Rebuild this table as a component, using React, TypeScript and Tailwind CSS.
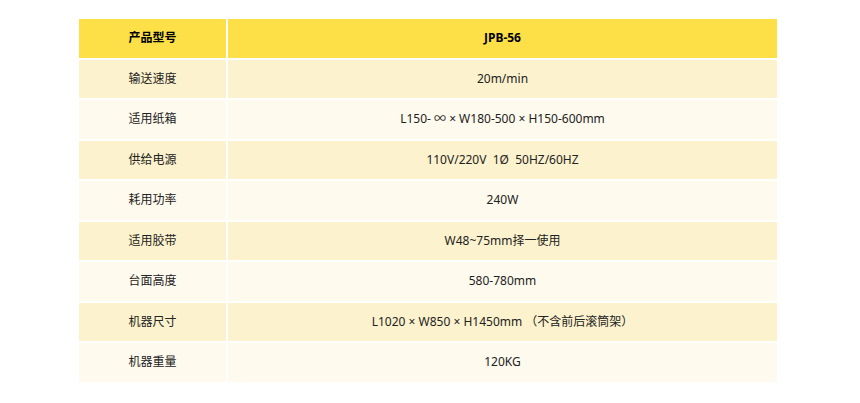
const rows: [string, string][] = [
  ["输送速度", "20m/min"],
  ["适用纸箱", "L150- ∞ × W180-500 × H150-600mm"],
  ["供给电源", "110V/220V  1Ø  50HZ/60HZ"],
  ["耗用功率", "240W"],
  ["适用胶带", "W48~75mm择一使用"],
  ["台面高度", "580-780mm"],
  ["机器尺寸", "L1020 × W850 × H1450mm （不含前后滚筒架）"],
  ["机器重量", "120KG"],
];

const font = "font-['Noto_Sans','Noto_Sans_CJK_SC',sans-serif]";

export default function App() {
  return (
    <div className={`min-h-screen bg-white pt-[19px] pl-[79px] ${font} text-[12px] text-[#222]`}>
      <div className="grid w-[698px] grid-cols-[147px_549px] gap-[2px]">
        <div className="flex h-[38.5px] items-center justify-center bg-[#fde047] font-bold text-black">产品型号</div>
        <div className="flex h-[38.5px] items-center justify-center bg-[#fde047] font-bold text-black">JPB-56</div>
        {rows.map(([label, value], i) => {
          const bg = i % 2 === 0 ? "bg-[#fcf2cd]" : "bg-[#fefaee]";
          return [
            <div key={label} className={`flex h-[38.5px] items-center justify-center ${bg}`}>
              {label}
            </div>,
            <div key={label + "-v"} className={`flex h-[38.5px] items-center justify-center whitespace-pre ${bg}`}>
              {value}
            </div>,
          ];
        })}
      </div>
    </div>
  );
}
